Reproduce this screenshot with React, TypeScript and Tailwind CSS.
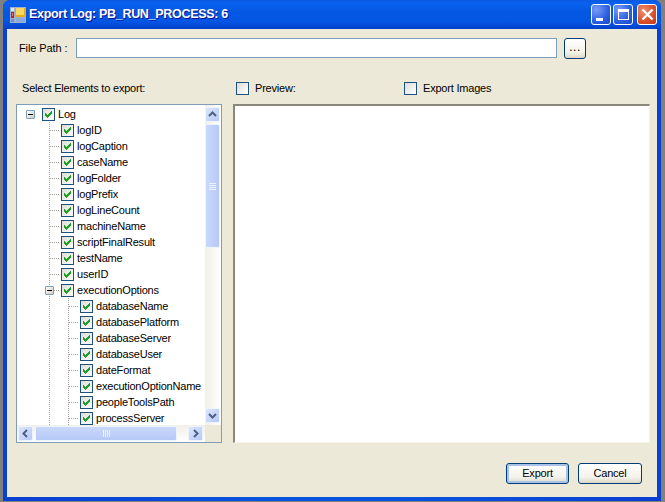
import React from "react";

const level1 = ["logID","logCaption","caseName","logFolder","logPrefix","logLineCount","machineName","scriptFinalResult","testName","userID"];
const level2 = ["databaseName","databasePlatform","databaseServer","databaseUser","dateFormat","executionOptionName","peopleToolsPath","processServer"];

function Check({ on = true }: { on?: boolean }) {
  return (
    <span className="flex h-[13px] w-[13px] shrink-0 items-center justify-center border border-[#1c5180] bg-[linear-gradient(135deg,#dcdcd7,#ffffff)]">
      {on && (
        <svg width="11" height="11" viewBox="0 0 11 11" shapeRendering="crispEdges">
          <path d="M2 4h1v1h1v1h1V5h1V4h1V3h1V2h1v3H8v1H7v1H6v1H5v1H4V8H3V7H2z" fill="#21a121" />
        </svg>
      )}
    </span>
  );
}

function Expander() {
  return (
    <span className="mr-[7px] flex h-[9px] w-[9px] shrink-0 items-center justify-center rounded-[1px] border border-[#7b9ebd] bg-[linear-gradient(135deg,#ffffff,#d0cdc0)]">
      <span className="h-px w-[5px] bg-black" />
    </span>
  );
}

function Row({ label, pad, expander }: { label: string; pad: string; expander?: boolean }) {
  return (
    <div className={`relative flex h-4 shrink-0 items-center ${pad}`}>
      {expander && <Expander />}
      <Check />
      <span className="ml-[3px] whitespace-nowrap">{label}</span>
    </div>
  );
}

function Connectors() {
  const l1 = Array.from({ length: 11 }, (_, i) => 25 + 16 * i);
  const l2 = Array.from({ length: 8 }, (_, i) => 201 + 16 * i);
  return (
    <svg className="absolute left-0 top-0" width="188" height="320" shapeRendering="crispEdges">
      <g stroke="#a5a29a" strokeDasharray="1 1" fill="none">
        <path d="M32.5 17V320" />
        <path d="M51.5 193V320" />
        {l1.map((y) => <path key={y} d={`M33 ${y + 0.5}H43`} />)}
        {l2.map((y) => <path key={y} d={`M52 ${y + 0.5}H62`} />)}
      </g>
    </svg>
  );
}

function ScrollBtn({ d, className = "" }: { d: string; className?: string }) {
  return (
    <span className={`flex h-[15px] w-[15px] shrink-0 items-center justify-center rounded-[2px] border border-[#eef3fd] bg-[linear-gradient(135deg,#dbe5fd,#b7caf6)] ${className}`}>
      <svg width="9" height="9" viewBox="0 0 9 9">
        <path d={d} fill="none" stroke="#4d6185" strokeWidth="2" />
      </svg>
    </span>
  );
}

function VScroll() {
  return (
    <div className="flex w-4 shrink-0 flex-col bg-[linear-gradient(90deg,#f1efe6,#ffffff)] pt-[2px] pb-[2px]">
      <ScrollBtn d="M1 6l3.5-3.5L8 6" />
      <div className="mt-[2px] flex h-[124px] w-[15px] flex-col items-center justify-center gap-px rounded-[2px] border border-[#eef3fd] bg-[linear-gradient(90deg,#c9d8fc,#b6c9f7)]">
        <span className="h-px w-[7px] bg-[#eef3fd]" />
        <span className="h-px w-[7px] bg-[#eef3fd]" />
        <span className="h-px w-[7px] bg-[#eef3fd]" />
        <span className="h-px w-[7px] bg-[#eef3fd]" />
      </div>
      <div className="flex-1" />
      <ScrollBtn d="M1 3l3.5 3.5L8 3" />
    </div>
  );
}

function HScroll() {
  return (
    <div className="flex h-[17px] shrink-0">
      <div className="flex w-[188px] items-center bg-[linear-gradient(180deg,#f1efe6,#ffffff)] pl-px">
        <ScrollBtn d="M6 1L2.5 4.5L6 8" />
        <div className="ml-[2px] flex h-[15px] w-[142px] items-center justify-center gap-px rounded-[2px] border border-[#eef3fd] bg-[linear-gradient(180deg,#c9d8fc,#b6c9f7)]">
          <span className="h-[7px] w-px bg-[#eef3fd]" />
          <span className="h-[7px] w-px bg-[#eef3fd]" />
          <span className="h-[7px] w-px bg-[#eef3fd]" />
          <span className="h-[7px] w-px bg-[#eef3fd]" />
        </div>
        <div className="flex-1" />
        <ScrollBtn d="M3 1l3.5 3.5L3 8" className="mr-[2px]" />
      </div>
      <div className="flex-1 bg-[#ece9d8]" />
    </div>
  );
}

function XpButton({ children, className = "" }: { children: React.ReactNode; className?: string }) {
  return (
    <button className={`flex items-center justify-center rounded-[3px] border border-[#003c74] bg-[linear-gradient(180deg,#ffffff,#f3f2ea_70%,#dcd8c8)] text-black ${className}`}>
      {children}
    </button>
  );
}

function TitleButton({ kind, className = "" }: { kind: "min" | "max" | "close"; className?: string }) {
  const bg = kind === "close"
    ? "bg-[radial-gradient(circle_at_30%_30%,#ec8d6f,#d9502a_60%,#c1391a)]"
    : "bg-[radial-gradient(circle_at_25%_25%,#7b9cf5,#2a5fe0_60%,#1c45c8)]";
  return (
    <span className={`flex h-[21px] w-5 items-center justify-center rounded-[3px] border border-white ${bg} ${className}`}>
      {kind === "min" && <span className="mt-[9px] mr-[3px] h-[3px] w-[7px] bg-white" />}
      {kind === "max" && <span className="h-[11px] w-[11px] border border-t-[3px] border-white" />}
      {kind === "close" && (
        <svg width="13" height="13" viewBox="0 0 13 13">
          <path d="M1.5 1.5l10 10M11.5 1.5l-10 10" stroke="#fff" strokeWidth="2.4" />
        </svg>
      )}
    </span>
  );
}

function AppIcon() {
  return (
    <svg width="16" height="16" viewBox="0 0 16 16" shapeRendering="crispEdges" className="shrink-0">
      <rect x="0" y="0" width="16" height="16" fill="#9db4cf" />
      <rect x="1" y="1" width="3" height="3" fill="#dfe6ef" />
      <rect x="5" y="1" width="10" height="9" fill="#e8a820" />
      <rect x="6" y="1" width="8" height="7" fill="#f8d860" />
      <rect x="1" y="5" width="3" height="6" fill="#c02020" />
      <rect x="2" y="6" width="1" height="3" fill="#f07070" />
      <rect x="1" y="12" width="3" height="3" fill="#6f90c0" />
      <rect x="6" y="11" width="9" height="4" fill="#8aa8d8" />
    </svg>
  );
}

export default function App() {
  return (
    <div className="h-[502px] w-[665px] overflow-hidden bg-[#808080] pl-[3px] pr-1 pb-px font-['Liberation_Sans',sans-serif] text-[11px] leading-none tracking-[-0.2px] text-black">
      <div className="flex h-full flex-col overflow-hidden rounded-t-[7px] bg-[linear-gradient(90deg,#0a3fd0,#0855dd_40%,#0855dd_60%,#0a3fd0)]">
        <div className="flex h-[29px] shrink-0 items-center bg-[linear-gradient(180deg,#0a5ae0,#0a60f0_12%,#0458e2_40%,#0555e4_75%,#0340c8)] pl-[7px] pr-[4px]">
          <AppIcon />
          <span className="ml-[3px] whitespace-nowrap text-[12.5px] font-bold tracking-[-0.3px] text-white [text-shadow:1px_1px_#0f1089]">
            Export Log: PB_RUN_PROCESS: 6
          </span>
          <div className="ml-auto flex items-center">
            <TitleButton kind="min" />
            <TitleButton kind="max" className="ml-[2px]" />
            <TitleButton kind="close" className="ml-1" />
          </div>
        </div>

        <div className="flex min-h-0 flex-1 px-1 pb-1">
          <div className="flex w-full flex-col bg-[#ece9d8]">
            <div className="mt-[9px] flex h-5 items-center">
              <span className="ml-3 w-[57px] tracking-[-0.1px]">File Path :</span>
              <div className="h-5 w-[481px] border border-[#7f9db9] bg-white" />
              <XpButton className="ml-[7px] mt-px h-[21px] w-[22px] pb-1 text-[12px] tracking-[0.5px]">...</XpButton>
            </div>

            <div className="mt-[24px] flex h-[13px] items-center">
              <span className="ml-[15px] w-[214px]">Select Elements to export:</span>
              <Check on={false} />
              <span className="ml-[6px] w-[149px]">Preview:</span>
              <Check on={false} />
              <span className="ml-[6px]">Export Images</span>
            </div>

            <div className="mt-[9px] flex">
              <div className="ml-[9px] flex h-[339px] w-[206px] shrink-0 flex-col border border-[#7f9db9] bg-white">
                <div className="flex h-[320px] shrink-0">
                  <div className="relative flex w-[188px] shrink-0 flex-col overflow-hidden pt-px">
                    <Connectors />
                    <Row label="Log" pad="pl-[9px]" expander />
                    {level1.map((l) => <Row key={l} label={l} pad="pl-[44px]" />)}
                    <Row label="executionOptions" pad="pl-[28px]" expander />
                    {level2.map((l) => <Row key={l} label={l} pad="pl-[63px]" />)}
                  </div>
                  <VScroll />
                </div>
                <HScroll />
              </div>
              <div className="ml-[11px] h-[339px] w-[417px] border-2 border-r border-b border-[#f5f3ea] border-t-[#8a887c] border-l-[#8a887c] bg-white" />
            </div>

            <div className="mt-5 flex justify-end gap-[9px] pr-[15px]">
              <XpButton className="h-[21px] w-[63px] shadow-[inset_0_0_0_2px_#a9c2ea]">Export</XpButton>
              <XpButton className="h-[21px] w-[64px]">Cancel</XpButton>
            </div>
          </div>
        </div>
      </div>
    </div>
  );
}
